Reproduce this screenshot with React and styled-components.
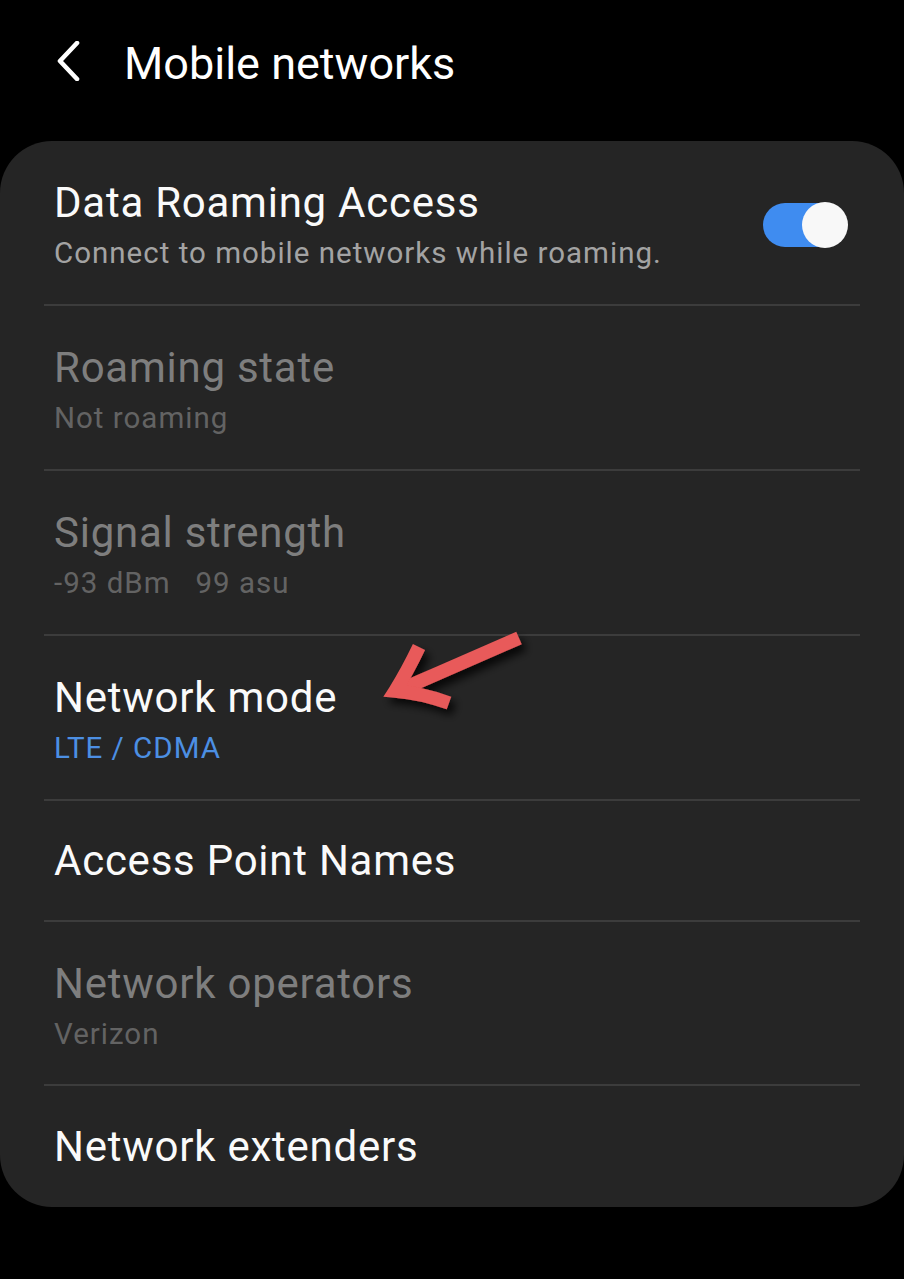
import styled, { createGlobalStyle } from "styled-components";

const GlobalStyle = createGlobalStyle`
  html, body {
    margin: 0;
    padding: 0;
    background: #000;
  }
  body {
    font-family: Roboto, "Noto Sans", "Liberation Sans", sans-serif;
    -webkit-font-smoothing: antialiased;
  }
`;

const items = [
  {
    id: "roaming-access",
    title: "Data Roaming Access",
    summary: "Connect to mobile networks while roaming.",
    toggle: true,
  },
  { id: "roaming-state", title: "Roaming state", summary: "Not roaming", disabled: true },
  {
    id: "signal",
    title: "Signal strength",
    summary: "-93 dBm\u00a0\u00a0\u00a099 asu",
    disabled: true,
  },
  { id: "mode", title: "Network mode", summary: "LTE / CDMA", accent: true, arrow: true },
  { id: "apn", title: "Access Point Names" },
  { id: "operators", title: "Network operators", summary: "Verizon", disabled: true },
  { id: "extenders", title: "Network extenders" },
];

function BackIcon() {
  return (
    <svg width="28" height="40" viewBox="0 0 28 40" fill="none">
      <path
        d="M23 2 L6 20 L23 38"
        stroke="#fff"
        strokeWidth="4.6"
        strokeLinecap="round"
        strokeLinejoin="round"
      />
    </svg>
  );
}

// red annotation arrow drawn over the list
function PointerArrow() {
  return (
    <ArrowMark width="170" height="100" viewBox="0 0 170 100">
      <defs>
        <filter id="arrowShadow" x="-30%" y="-30%" width="160%" height="160%">
          <feDropShadow dx="5" dy="6" stdDeviation="4" floodColor="#000" floodOpacity="0.8" />
        </filter>
      </defs>
      <g
        filter="url(#arrowShadow)"
        stroke="#e85a5a"
        strokeWidth="13.5"
        fill="none"
        strokeLinejoin="miter"
        strokeMiterlimit="6"
      >
        <path d="M157 11 L38 63" strokeLinecap="butt" />
        <path d="M57 20 Q45 45 33 64 Q59 66 87 76" strokeLinecap="butt" />
      </g>
    </ArrowMark>
  );
}

function App() {
  return (
    <>
      <GlobalStyle />
      <Screen>
        <Header>
          <BackButton aria-label="Back">
            <BackIcon />
          </BackButton>
          <Title>Mobile networks</Title>
        </Header>
        <Card>
          {items.map((item, i) => (
            <Row key={item.id} $last={i === items.length - 1}>
              <Texts>
                <ItemTitle $disabled={item.disabled}>{item.title}</ItemTitle>
                {item.summary ? (
                  <Summary $disabled={item.disabled} $accent={item.accent}>
                    {item.summary}
                  </Summary>
                ) : null}
              </Texts>
              {item.toggle ? (
                <Switch>
                  <Knob />
                </Switch>
              ) : null}
              {item.arrow ? <PointerArrow /> : null}
            </Row>
          ))}
        </Card>
      </Screen>
    </>
  );
}

export default App;

const Screen = styled.div`
  width: 904px;
  min-height: 1279px;
  background: #000;
`;

const Header = styled.div`
  height: 141px;
  box-sizing: border-box;
  padding: 37px 0 0 54px;
  display: flex;
  align-items: flex-start;
`;

const BackButton = styled.div`
  width: 28px;
  height: 40px;
  margin-top: 4px;
  margin-right: 42px;
  display: flex;
`;

const Title = styled.div`
  color: #fff;
  font-size: 45px;
  line-height: 54px;
  font-weight: 400;
`;

const Card = styled.div`
  background: #252525;
  border-radius: 52px;
  padding: 0 44px;
`;

const Row = styled.div`
  position: relative;
  display: flex;
  align-items: center;
  justify-content: space-between;
  min-height: 121px;
  padding: 37px 0 32px 10px;
  box-sizing: border-box;
  border-bottom: ${(p) => (p.$last ? "none" : "2px solid #3c3c3c")};
  &:nth-child(n + 5) {
    padding-top: 35px;
    padding-bottom: 34px;
  }
  &:nth-child(6) {
    padding-top: 37px;
    padding-bottom: 31px;
  }
`;

const Texts = styled.div`
  display: flex;
  flex-direction: column;
  gap: 6px;
`;

const ItemTitle = styled.div`
  font-size: 42px;
  line-height: 50px;
  letter-spacing: 0.75px;
  color: ${(p) => (p.$disabled ? "#7e7e7e" : "#fafafa")};
`;

const Summary = styled.div`
  font-size: 29.5px;
  line-height: 38px;
  letter-spacing: 1px;
  color: ${(p) => (p.$accent ? "#4c8fe3" : p.$disabled ? "#636363" : "#a3a3a3")};
`;

const Switch = styled.div`
  width: 84px;
  height: 44px;
  margin-right: 13px;
  border-radius: 22px;
  background: #3f8cf0;
  position: relative;
`;

const Knob = styled.div`
  position: absolute;
  right: -1px;
  top: -1px;
  width: 46px;
  height: 46px;
  border-radius: 50%;
  background: #f8f8f8;
`;

const ArrowMark = styled.svg`
  position: absolute;
  left: 318px;
  top: -9px;
  overflow: visible;
`;
